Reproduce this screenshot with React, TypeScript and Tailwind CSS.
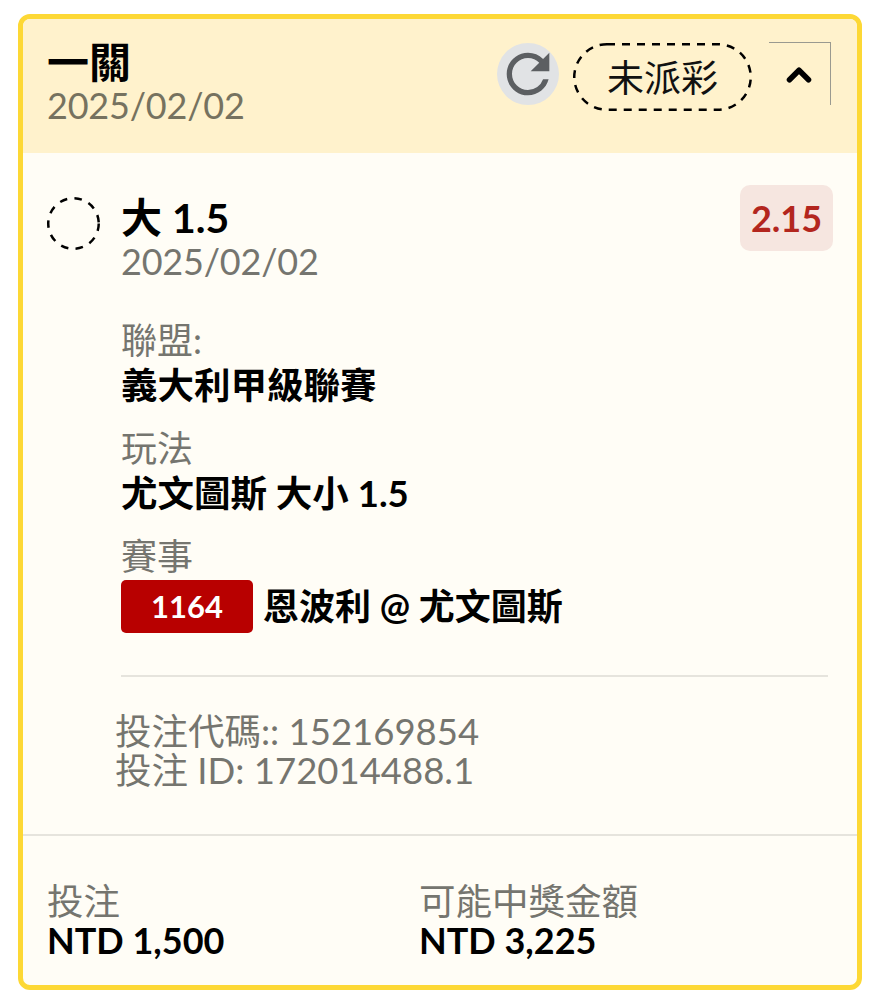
import { ChevronUp } from 'lucide-react';
import { MdRefresh } from 'react-icons/md';

const font = { fontFamily: 'Lato, "Noto Sans CJK TC", sans-serif' };

function Field({ label, children }: { label: string; children: React.ReactNode }) {
  return (
    <div className="mb-[22px]">
      <p className="text-[36px] leading-[40px] text-[#75756f]">{label}</p>
      <div className="mt-[4px]">{children}</div>
    </div>
  );
}

export default function App() {
  return (
    <div className="bg-white h-[1000px] pt-[14px] pl-[18px]" style={font}>
      <div className="w-[844px] h-[976px] rounded-[12px] border-[5px] border-[#fdd835] bg-[#fffdf6] overflow-hidden">
        <div className="h-[134px] bg-[#fff2cc] flex items-start justify-between pl-[24px] pr-[26px]">
          <div className="pt-[21px]">
            <h2 className="text-[42px] leading-[44px] font-bold text-black">一關</h2>
            <p className="text-[36px] leading-[42px] tracking-[-0.2px] text-[#76725f]">2025/02/02</p>
          </div>
          <div className="flex items-start pt-[24px]">
            <div className="w-[62px] h-[62px] rounded-full bg-[#e1e3e5] flex items-center justify-center">
              <MdRefresh className="w-[64px] h-[64px] shrink-0 text-[#5c5f62]" />
            </div>
            <div className="relative ml-[14px] w-[179px] h-[68px] pt-[2px] flex items-center justify-center text-[37px] text-[#111]">
              <svg className="absolute inset-0" width="179" height="68" fill="none">
                <rect x="1.25" y="1.25" width="176.5" height="65.5" rx="32.75" stroke="#000" strokeWidth="2.5" strokeDasharray="8 7" />
              </svg>
              未派彩
            </div>
            <div className="-mt-[1px] ml-[17px] w-[62px] h-[63px] border-t border-r border-[#9a9a90] flex items-center justify-center pr-[2px]">
              <ChevronUp className="mt-[1px] w-[38px] h-[38px] text-black" strokeWidth={3.5} />
            </div>
          </div>
        </div>

        <div className="pl-[24px] pr-[24px] pt-[32px]">
          <div className="flex items-start justify-between">
            <div className="flex items-start">
              <svg className="mt-[12px]" width="53" height="53" fill="none">
                <circle cx="26.5" cy="26.5" r="25.25" stroke="#000" strokeWidth="2.5" strokeDasharray="7.5 7.4" />
              </svg>
              <div className="ml-[21px] mt-[11px]">
                <h3 className="text-[41px] leading-[44px] font-bold text-black">大 1.5</h3>
                <p className="text-[36px] leading-[42px] tracking-[-0.2px] text-[#75756f]">2025/02/02</p>
              </div>
            </div>
            <div className="w-[93px] h-[66px] rounded-[10px] bg-[#f6e6e0] flex items-center justify-center text-[36px] font-bold text-[#b3261e]">
              2.15
            </div>
          </div>

          <div className="ml-[74px] mt-[38px] mr-[5px]">
            <Field label="聯盟:">
              <p className="text-[36.5px] leading-[42px] font-bold text-black">義大利甲級聯賽</p>
            </Field>
            <Field label="玩法">
              <p className="text-[36.5px] leading-[42px] font-bold text-black">尤文圖斯 大小 1.5</p>
            </Field>
            <p className="text-[36px] leading-[40px] text-[#75756f]">賽事</p>
            <div className="flex items-center mt-[3px]">
              <span className="w-[132px] h-[53px] rounded-[5px] bg-[#b80000] flex items-center justify-center text-[31px] font-bold text-[#fff]">
                1164
              </span>
              <span className="ml-[10px] text-[36px] font-bold text-black">恩波利 @ 尤文圖斯</span>
            </div>
            <div className="mt-[42px] h-[2px] bg-[#e6e4dd]" />
            <div className="mt-[35px] -ml-[6px] text-[36.5px] leading-[39px] text-[#75756f]">
              <p>投注代碼:: 152169854</p>
              <p>投注 ID: 172014488.1</p>
            </div>
          </div>
        </div>

        <div className="mt-[44px] h-[2px] bg-[#e6e4dd]" />

        <div className="flex pl-[24px] pt-[45px]">
          <div className="w-[372px]">
            <p className="text-[36.5px] leading-[40px] text-[#75756f]">投注</p>
            <p className="text-[36px] leading-[38px] font-bold text-black">NTD 1,500</p>
          </div>
          <div>
            <p className="text-[36.5px] leading-[40px] text-[#75756f]">可能中獎金額</p>
            <p className="text-[36px] leading-[38px] font-bold text-black">NTD 3,225</p>
          </div>
        </div>
      </div>
    </div>
  );
}
